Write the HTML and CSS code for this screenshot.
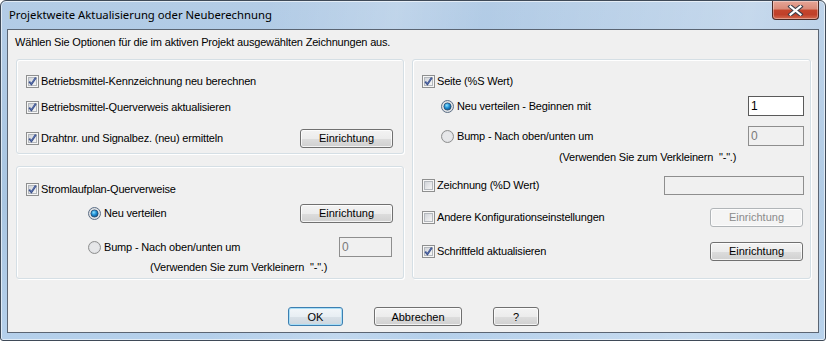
FILE: index.html
```html
<!DOCTYPE html>
<html lang="de">

<head>
    <meta charset="UTF-8" />
    <title>Projektweite Aktualisierung oder Neuberechnung</title>
    <link rel="stylesheet" href="styles.css">
</head>

<body>
    <svg class="defs" width="0" height="0">
        <defs>
            <linearGradient id="boxFill" x1="0" y1="0" x2="1" y2="1">
                <stop offset="0" stop-color="#cfd2d7" />
                <stop offset="1" stop-color="#f8f8f8" />
            </linearGradient>
            <radialGradient id="radioFill" cx="0.5" cy="0.5" r="0.6">
                <stop offset="0" stop-color="#fbfbfb" />
                <stop offset="1" stop-color="#d3d5d9" />
            </radialGradient>
            <radialGradient id="dotFill" cx="0.4" cy="0.35" r="0.7">
                <stop offset="0" stop-color="#8ee4ff" />
                <stop offset="0.5" stop-color="#1e8fd6" />
                <stop offset="1" stop-color="#0e4f82" />
            </radialGradient>
            <symbol id="box" viewBox="0 0 13 13">
                <rect x="0.5" y="0.5" width="12" height="12" fill="#f6f6f6" stroke="#8e8f8f" />
                <rect x="2.5" y="2.5" width="8" height="8" fill="url(#boxFill)" stroke="#b4b8bd" />
            </symbol>
            <symbol id="tick" viewBox="0 0 13 13">
                <rect x="0.5" y="0.5" width="12" height="12" fill="#f6f6f6" stroke="#8e8f8f" />
                <rect x="2.5" y="2.5" width="8" height="8" fill="url(#boxFill)" stroke="#b4b8bd" />
                <path d="M3.2 6.6 L5.4 9.2 L9.8 2.6" fill="none" stroke="#3a4f8a" stroke-width="1.9" />
                <path d="M3.6 6.6 L5.4 8.6 L9.4 3" fill="none" stroke="#6d86c4" stroke-width="0.6" />
            </symbol>
            <symbol id="radio" viewBox="0 0 13 13">
                <circle cx="6.5" cy="6.5" r="6" fill="url(#radioFill)" stroke="#8e8f8f" />
                <circle cx="6.5" cy="6.5" r="4" fill="#e6e7e9" />
            </symbol>
            <symbol id="radioOn" viewBox="0 0 13 13">
                <circle cx="6.5" cy="6.5" r="6" fill="url(#radioFill)" stroke="#5d6f86" />
                <circle cx="6.5" cy="6.5" r="3.6" fill="url(#dotFill)" stroke="#234a70" stroke-width="0.8" />
            </symbol>
        </defs>
    </svg>

    <div class="window">
        <div class="titlebar">
            <span class="title">Projektweite Aktualisierung oder Neuberechnung</span>
            <div class="close">
                <svg width="17" height="11" viewBox="0 0 17 11">
                    <path d="M3.5 1.5 L13.5 9.5 M13.5 1.5 L3.5 9.5" stroke="#3b3f4a" stroke-width="4.2" stroke-linecap="square" />
                    <path d="M3.5 1.5 L13.5 9.5 M13.5 1.5 L3.5 9.5" stroke="#ffffff" stroke-width="2.2" stroke-linecap="square" />
                </svg>
            </div>
        </div>

        <div class="client">
            <p class="intro">Wählen Sie Optionen für die im aktiven Projekt ausgewählten Zeichnungen aus.</p>

            <div class="groups">
                <div class="col-left">
                    <div class="group g1">
                        <div class="row">
                            <label class="opt"><svg class="ic"><use href="#tick" /></svg>Betriebsmittel-Kennzeichnung neu berechnen</label>
                        </div>
                        <div class="row r2">
                            <label class="opt"><svg class="ic"><use href="#tick" /></svg>Betriebsmittel-Querverweis aktualisieren</label>
                        </div>
                        <div class="row r3">
                            <label class="opt"><svg class="ic"><use href="#tick" /></svg>Drahtnr. und Signalbez. (neu) ermitteln</label>
                            <button class="btn">Einrichtung</button>
                        </div>
                    </div>

                    <div class="group g2">
                        <div class="row">
                            <label class="opt"><svg class="ic"><use href="#tick" /></svg>Stromlaufplan-Querverweise</label>
                        </div>
                        <div class="row sub r5">
                            <label class="opt radio"><svg class="ic"><use href="#radioOn" /></svg>Neu verteilen</label>
                            <button class="btn">Einrichtung</button>
                        </div>
                        <div class="row sub r6">
                            <label class="opt radio"><svg class="ic"><use href="#radio" /></svg>Bump - Nach oben/unten um</label>
                            <span class="field off small">0</span>
                        </div>
                        <p class="note left-note">(Verwenden Sie zum Verkleinern &nbsp;"-".)</p>
                    </div>
                </div>

                <div class="group g3">
                    <div class="row">
                        <label class="opt"><svg class="ic"><use href="#tick" /></svg>Seite (%S Wert)</label>
                    </div>
                    <div class="row sub2 s2">
                        <label class="opt radio"><svg class="ic"><use href="#radioOn" /></svg>Neu verteilen - Beginnen mit</label>
                        <span class="field">1</span>
                    </div>
                    <div class="row sub2 s3">
                        <label class="opt radio"><svg class="ic"><use href="#radio" /></svg>Bump - Nach oben/unten um</label>
                        <span class="field off">0</span>
                    </div>
                    <p class="note right-note">(Verwenden Sie zum Verkleinern &nbsp;"-".)</p>
                    <div class="row s5">
                        <label class="opt"><svg class="ic"><use href="#box" /></svg>Zeichnung (%D Wert)</label>
                        <span class="field off wide"></span>
                    </div>
                    <div class="row s6">
                        <label class="opt"><svg class="ic"><use href="#box" /></svg>Andere Konfigurationseinstellungen</label>
                        <button class="btn disabled">Einrichtung</button>
                    </div>
                    <div class="row s7">
                        <label class="opt"><svg class="ic"><use href="#tick" /></svg>Schriftfeld aktualisieren</label>
                        <button class="btn">Einrichtung</button>
                    </div>
                </div>
            </div>

            <div class="actions">
                <button class="btn default ok">OK</button>
                <button class="btn cancel">Abbrechen</button>
                <button class="btn help">?</button>
            </div>
        </div>
    </div>
</body>

</html>
```

FILE: styles.css
```css
* {
    box-sizing: border-box;
}

body {
    margin: 0;
    font-family: "Liberation Sans", Arial, sans-serif;
    font-size: 11px;
    letter-spacing: -0.18px;
    color: #000;
    background: #fff;
}

.defs {
    position: absolute;
    width: 0;
    height: 0;
}

.window {
    width: 826px;
    height: 341px;
    border: 1px solid #3f4a58;
    border-radius: 6px 6px 3px 3px;
    padding: 0 6px 7px 6px;
    display: flex;
    flex-direction: column;
    background:
        linear-gradient(100deg, rgba(255, 255, 255, 0) 30%, rgba(255, 255, 255, 0.18) 45%, rgba(255, 255, 255, 0) 55%, rgba(255, 255, 255, 0.25) 85%, rgba(255, 255, 255, 0.05) 100%),
        linear-gradient(#b3cce6, #a9c6e2 60%, #b5d0eb);
    box-shadow: inset 0 0 0 1px rgba(255, 255, 255, 0.6);
}

.titlebar {
    height: 28px;
    display: flex;
    align-items: flex-start;
    justify-content: space-between;
}

.title {
    font-family: "Noto Sans", sans-serif;
    font-size: 11.3px;
    letter-spacing: 0;
    line-height: 16px;
    padding: 6px 0 0 2px;
    color: #000;
}

.close {
    width: 47px;
    height: 19px;
    border: 1px solid #4a2a26;
    border-top: none;
    border-radius: 0 0 4px 4px;
    background: linear-gradient(#e6a697 0%, #d98a78 45%, #c4452c 50%, #c04029 75%, #d36a4f 100%);
    box-shadow: inset 0 0 0 1px rgba(255, 255, 255, 0.35);
    display: flex;
    align-items: center;
    justify-content: center;
}

.client {
    flex: 1;
    border: 1px solid #5b6573;
    background: #f0f0f0;
    padding: 0 7px 0 8px;
    display: flex;
    flex-direction: column;
}

.intro {
    margin: 6px 0 0 -1px;
    line-height: 13px;
}

.groups {
    margin-top: 10px;
    height: 220px;
    display: grid;
    grid-template-columns: 388px 1fr;
    column-gap: 8px;
}

.col-left {
    display: flex;
    flex-direction: column;
    gap: 12px;
}

.group {
    border: 1px solid #d5dfe5;
    border-radius: 3px;
    box-shadow: inset 1px 1px 0 #fff, 1px 1px 0 #fff;
    padding: 0 10px 0 9px;
}

.g1 {
    height: 95px;
    padding-top: 11px;
}

.g2 {
    flex: 1;
    padding-top: 12px;
}

.g3 {
    padding: 11px 6px 0 9px;
}

.row {
    height: 20px;
    display: flex;
    align-items: center;
    justify-content: space-between;
}

.opt {
    display: flex;
    align-items: center;
    gap: 2px;
    white-space: nowrap;
}

.opt.radio {
    gap: 3px;
}

.ic {
    width: 13px;
    height: 13px;
    flex: none;
}

.r2 {
    margin-top: 6px;
}

.r3 {
    margin-top: 11px;
}

.sub {
    padding-left: 62px;
}

.r5 {
    margin-top: 4px;
}

.r6 {
    margin-top: 14px;
}

.sub2 {
    padding-left: 19px;
}

.s2 {
    margin-top: 5px;
}

.s3 {
    margin-top: 10px;
}

.s5 {
    margin-top: 11px;
}

.s6 {
    margin-top: 12px;
}

.s7 {
    margin-top: 14px;
}

.note {
    margin: 4px 0 0;
    line-height: 13px;
    white-space: nowrap;
}

.left-note {
    padding-left: 124px;
}

.right-note {
    margin-top: 5px;
    padding-left: 137px;
}

.btn {
    font: inherit;
    color: #000;
    width: 93px;
    height: 19px;
    padding: 0;
    border: 1px solid #707070;
    border-radius: 3px;
    background: linear-gradient(#f3f3f3 0%, #ececec 50%, #dddddd 51%, #d0d0d0 100%);
    box-shadow: inset 0 0 0 1px rgba(255, 255, 255, 0.75);
}

.btn.disabled {
    color: #8b8b8b;
    border-color: #b1b5b8;
    background: #f4f4f4;
    margin-right: 1px;
}

.g3 .btn {
    margin-right: 1px;
}

.field {
    height: 20px;
    width: 56px;
    border: 1px solid #5a5a5a;
    background: #fff;
    padding-left: 2px;
    font-size: 12px;
    line-height: 18px;
}

.field.off {
    border-color: #8e8e8e;
    background: #f0f0f0;
    color: #7a7a7a;
}

.field.small {
    width: 53px;
    margin-right: 1px;
}

.field.wide {
    width: 140px;
    height: 19px;
}

.actions {
    margin-top: 28px;
    display: flex;
    justify-content: center;
    gap: 31px;
}

.ok {
    width: 55px;
    border-color: #3c7fb1;
    box-shadow: inset 0 0 0 1px #a8def7;
    background: linear-gradient(#f2f6f9 0%, #e8eef3 50%, #d9e1e8 51%, #cdd6de 100%);
}

.cancel {
    width: 88px;
}

.help {
    width: 46px;
}
```
